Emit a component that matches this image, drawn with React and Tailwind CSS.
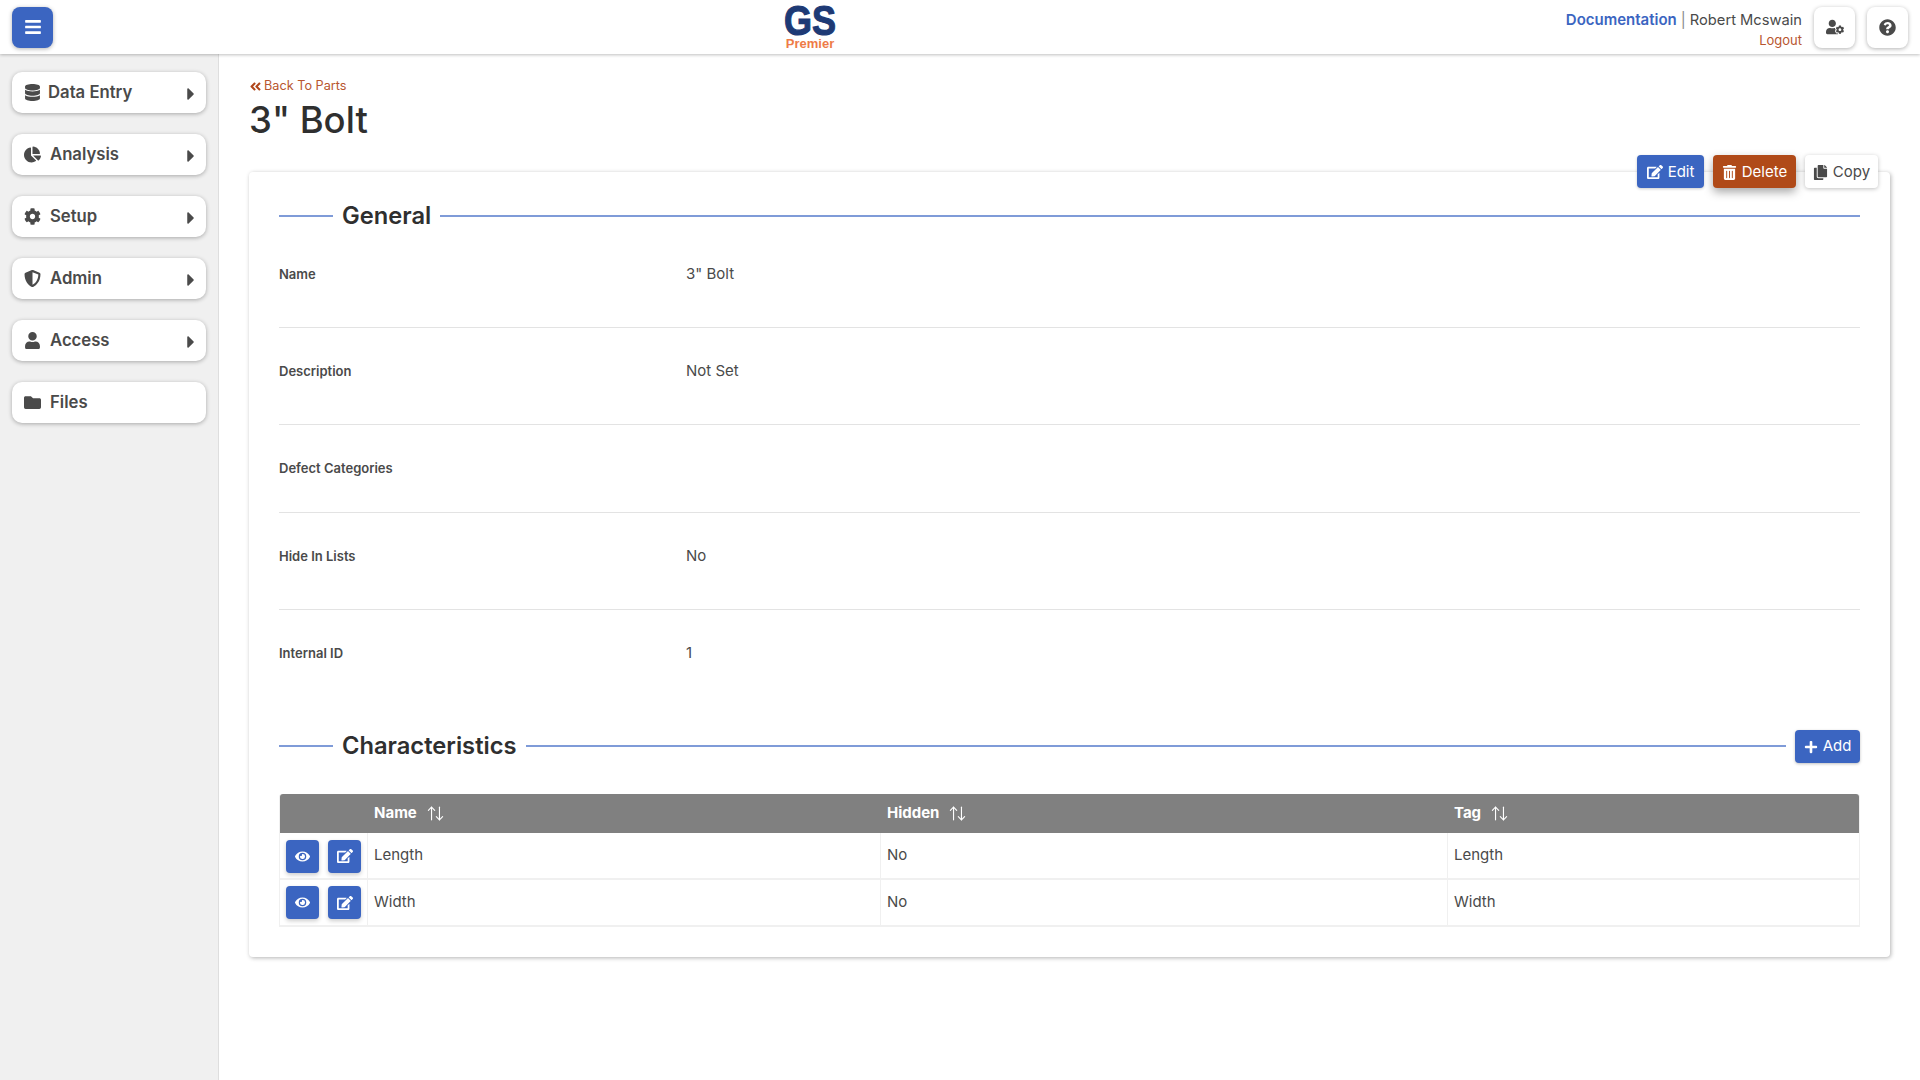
import React from "react";
import {
  FaBars,
  FaDatabase,
  FaChartPie,
  FaCog,
  FaShieldAlt,
  FaUser,
  FaFolder,
  FaCaretRight,
  FaAngleDoubleLeft,
  FaEdit,
  FaTrashAlt,
  FaCopy,
  FaPlus,
  FaEye,
  FaUserCog,
  FaQuestionCircle,
} from "react-icons/fa";
import { ArrowUpDown } from "lucide-react";

const navItems = [
  { label: "Data Entry", icon: FaDatabase, caret: true, gap: "gap-[7px]" },
  { label: "Analysis", icon: FaChartPie, caret: true, gap: "gap-[9px]" },
  { label: "Setup", icon: FaCog, caret: true, gap: "gap-[9px]" },
  { label: "Admin", icon: FaShieldAlt, caret: true, gap: "gap-[9px]" },
  { label: "Access", icon: FaUser, caret: true, gap: "gap-[9px]" },
  { label: "Files", icon: FaFolder, caret: false, gap: "gap-[9px]" },
];

const details = [
  { label: "Name", value: '3" Bolt', h: "h-[97px]", line: true },
  { label: "Description", value: "Not Set", h: "h-[97px]", line: true },
  { label: "Defect Categories", value: "", h: "h-[88px]", line: true },
  { label: "Hide In Lists", value: "No", h: "h-[97px]", line: true },
  { label: "Internal ID", value: "1", h: "h-[80px]", line: false },
];

const characteristics = [
  { name: "Length", hidden: "No", tag: "Length" },
  { name: "Width", hidden: "No", tag: "Width" },
];

const SectionTitle = ({ children, className = "" }) => (
  <div className={`flex items-center gap-[9px] flex-1 ${className}`}>
    <div className="w-[54px] h-[2px] bg-[#7f9bd8] mt-[2px]" />
    <h2 className="text-[23.7px] font-semibold leading-none text-[#2f2f2f]">
      {children}
    </h2>
    <div className="flex-1 h-[2px] bg-[#7f9bd8] mt-[2px]" />
  </div>
);

const SortHeader = ({ label, width }) => (
  <div className={`${width} flex items-center gap-[9px] pl-[6px] text-[15px] font-bold text-white`}>
    {label}
    <ArrowUpDown size={19} strokeWidth={1.4} />
  </div>
);

const SquareButton = ({ icon: Icon, size }) => (
  <button className="w-[33px] h-[33px] rounded-[4px] bg-[#3b65c1] text-white flex items-center justify-center shadow-[0_2px_4px_rgba(0,0,0,0.2)]">
    <Icon size={size} />
  </button>
);

const App = () => {
  return (
    <div className="min-h-screen h-[1080px] bg-white flex flex-col font-['Inter',sans-serif] text-[#4a4a4a] overflow-hidden">
      <header className="relative z-10 h-[54px] shrink-0 bg-white shadow-[0_1px_3px_rgba(0,0,0,0.25)] flex items-center justify-between pl-[12px] pr-[12px]">
        <button className="w-[41px] h-[41px] rounded-[8px] bg-[#3b65c1] text-white flex items-center justify-center shadow-[0_1px_4px_rgba(0,0,0,0.3)]">
          <FaBars size={18} />
        </button>

        <div className="absolute left-[780px] top-[4px] w-[60px] flex flex-col items-center font-['Liberation_Sans',sans-serif] font-bold">
          <span className="text-[36px] leading-[34px] scale-y-[1.19] text-[#1e3a75] [-webkit-text-stroke:1px_#1e3a75]">
            GS
          </span>
          <span className="text-[13px] leading-[11px] text-[#ee7b47]">Premier</span>
        </div>

        <div className="flex items-center">
          <div className="flex flex-col items-end text-[15px] leading-[20px] mr-[12px] mt-[5px]">
            <div className="whitespace-nowrap text-[#4a4a4a]">
              <span className="font-semibold text-[#3b65c1]">Documentation</span>
              <span className="mx-[4px] text-[#8a8a8a]">|</span>
              <span className="text-[14.7px]">Robert Mcswain</span>
            </div>
            <span className="text-[13px] text-[#b8562f]">Logout</span>
          </div>
          <button className="w-[41px] h-[41px] rounded-[8px] bg-white flex items-center justify-center shadow-[0_1px_4px_rgba(0,0,0,0.3)] mr-[12px]">
            <FaUserCog size={18} />
          </button>
          <button className="w-[41px] h-[41px] rounded-[8px] bg-white flex items-center justify-center shadow-[0_1px_4px_rgba(0,0,0,0.3)]">
            <FaQuestionCircle size={17} />
          </button>
        </div>
      </header>

      <div className="flex flex-1">
        <aside className="w-[219px] shrink-0 bg-[#f0f0f0] border-r border-[#dedede] pt-[18px] pl-[12px] flex flex-col gap-[21px]">
          {navItems.map(({ label, icon: Icon, caret, gap }) => (
            <div
              key={label}
              className="w-[194px] h-[41px] rounded-[10px] bg-white shadow-[0_1px_4px_rgba(0,0,0,0.3)] flex items-center justify-between pl-[12px] pr-[5px]"
            >
              <div className={`flex items-center ${gap} text-[16.7px] font-semibold text-[#4a4a4a]`}>
                <span className="w-[17px] flex justify-center">
                  <Icon size={17} />
                </span>
                {label}
              </div>
              {caret && <FaCaretRight size={20} className="mt-[2px]" />}
            </div>
          ))}
        </aside>

        <main className="flex-1 pl-[30px] pr-[30px] pt-[23px]">
          <a className="flex items-center gap-[2px] text-[12.7px] leading-[18px] text-[#b8562f]">
            <FaAngleDoubleLeft size={13} className="text-[#b0461a]" />
            Back To Parts
          </a>
          <h1 className="text-[36.5px] font-medium leading-[46px] text-[#2f2f2f] mt-[2px]">
            3" Bolt
          </h1>

          <section className="relative mt-[29px] h-[785px] rounded-[4px] bg-white shadow-[1px_1px_4px_rgba(0,0,0,0.3)] px-[30px] pt-[30px]">
            <div className="absolute right-[12px] top-[-17px] flex items-center gap-[9px] text-[15px]">
              <button className="h-[33px] w-[67px] pt-[1px] justify-center rounded-[4px] bg-[#3b65c1] text-white flex items-center gap-[5px] shadow-[0_1px_3px_rgba(0,0,0,0.2)]">
                <FaEdit size={16} />
                Edit
              </button>
              <button className="h-[33px] w-[83px] pt-[1px] justify-center rounded-[4px] bg-[#b04a18] text-white flex items-center gap-[5px] shadow-[0_4px_10px_rgba(0,0,0,0.35)]">
                <FaTrashAlt size={15} />
                Delete
              </button>
              <button className="h-[33px] w-[73px] pt-[1px] justify-center rounded-[4px] bg-white text-[#4a4a4a] flex items-center gap-[5px] shadow-[0_1px_4px_rgba(0,0,0,0.25)]">
                <FaCopy size={15} />
                Copy
              </button>
            </div>

            <div className="h-[27px] flex items-center">
              <SectionTitle>General</SectionTitle>
            </div>

            <div className="mt-[2px]">
              {details.map(({ label, value, h, line }) => (
                <div
                  key={label}
                  className={`${h} flex pt-[33px] ${line ? "border-b border-[#e3e3e3]" : ""}`}
                >
                  <div className="w-[407px] text-[13px] font-semibold leading-[20px]">
                    {label}
                  </div>
                  <div className="text-[15px] leading-[20px]">{value}</div>
                </div>
              ))}
            </div>

            <div className="flex items-center gap-[9px] mt-[40px]">
              <SectionTitle className="mb-[2px]">Characteristics</SectionTitle>
              <button className="h-[33px] w-[65px] rounded-[4px] bg-[#3b65c1] text-white text-[15px] flex items-center justify-center gap-[5px] shadow-[0_1px_3px_rgba(0,0,0,0.25)]">
                <FaPlus size={14} />
                Add
              </button>
            </div>

            <div className="mt-[31px] border-x border-b-2 border-[#f0f0f0] rounded-t-[3px]">
              <div className="h-[39px] bg-[#808080] rounded-t-[3px] flex items-center">
                <div className="w-[88px]" />
                <SortHeader label="Name" width="w-[513px]" />
                <SortHeader label="Hidden" width="w-[567px]" />
                <SortHeader label="Tag" width="flex-1" />
              </div>
              {characteristics.map((row, i) => (
                <div
                  key={row.name}
                  className={`flex items-center text-[15px] ${i === 0 ? "h-[47px] border-b-2 border-[#f0f0f0]" : "h-[45px]"}`}
                >
                  <div className={`w-[88px] h-full flex items-center gap-[9px] pl-[6px] border-r border-[#f0f0f0] ${i === 0 ? "pt-[1px]" : ""}`}>
                    <SquareButton icon={FaEye} size={15} />
                    <SquareButton icon={FaEdit} size={16} />
                  </div>
                  <div className="w-[513px] h-full flex items-center pl-[6px] border-r border-[#f0f0f0]">
                    {row.name}
                  </div>
                  <div className="w-[567px] h-full flex items-center pl-[6px] border-r border-[#f0f0f0]">
                    {row.hidden}
                  </div>
                  <div className="flex-1 h-full flex items-center pl-[6px]">{row.tag}</div>
                </div>
              ))}
            </div>
          </section>
        </main>
      </div>
    </div>
  );
};

export default App;
